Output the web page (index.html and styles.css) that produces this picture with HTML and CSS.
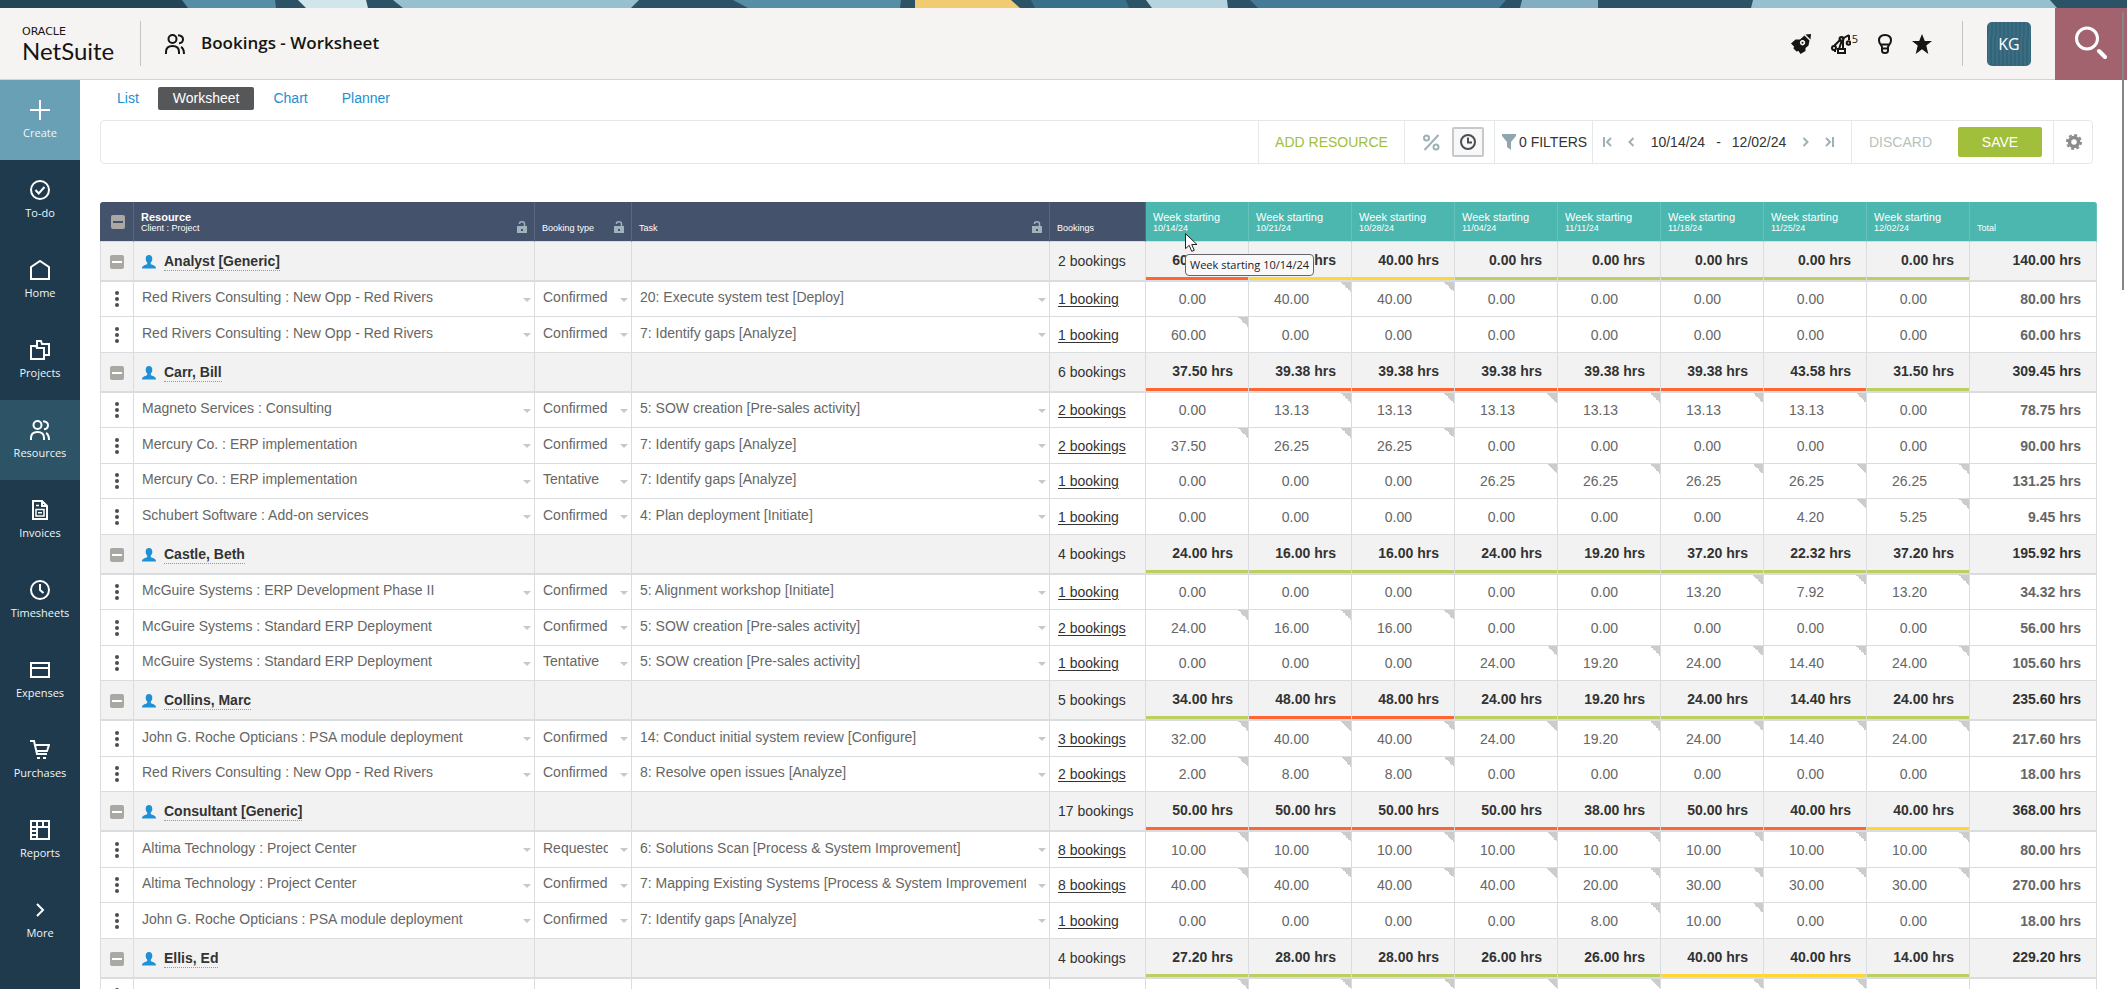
FILE: index.html
```
<!DOCTYPE html>
<html lang="en">
<head>
    <meta charset="UTF-8">
    <meta name="viewport" content="width=device-width, initial-scale=1.0">
    <title>Bookings - Worksheet</title>
    <link rel="stylesheet" href="styles.css">
</head>
<body>

    <svg class="band" viewBox="0 0 2127 8" preserveAspectRatio="none" aria-hidden="true">
        <rect width="2127" height="8" fill="#2c5265"/>
        <path fill="#244558" d="M0 0H182L188 8H0z"/>
        <path fill="#568ea6" d="M182 0H275L276 8H188z"/>
        <path fill="#d0e6ea" d="M298 0H366L368 8H306z"/>
        <path fill="#96bfcf" d="M393 0H639L631 8H403z"/>
        <path fill="#568ea6" d="M733 0H901L900 8H748z"/>
        <path fill="#f0cb72" d="M915 0H1011L1020 8H915z"/>
        <path fill="#38708a" d="M1031 0H1126L1129 8H1035z"/>
        <path fill="#b6d4df" d="M1146 0H1227L1228 8H1152z"/>
        <path fill="#457b96" d="M1250 0H1506L1499 8H1258z"/>
        <path fill="#82afc0" d="M1522 0H1598V8H1520z"/>
        <path fill="#96bfcf" d="M1753 0H2050L2057 8H1751z"/>
    </svg>

    <header class="header">
        <a class="logo" href="#"><span class="logo-top">ORACLE</span><span class="logo-name">NetSuite</span></a>
        <div class="page-title">
            <svg width="20" height="20" viewBox="0 0 20 20" fill="none" stroke="currentColor" stroke-width="2"><circle cx="7.500" cy="5" r="4"/><path d="M1 20v-2c0-4 2.500-6 6.500-6s6.500 2 6.500 6v2M13 1.200c3 .3 5 1.800 5 4s-1.500 3.800-4 4M16 13c2.300 1.200 3 3.200 3 7"/></svg>
            <h1>Bookings - Worksheet</h1>
        </div>
        <div class="header-tools">
            <button class="tool" aria-label="What's new">
                <svg width="20" height="20" viewBox="0 0 20 20" fill="currentColor"><path fill-rule="evenodd" d="M13.500 1.500l5 5-1 5-3 2.500V17l-5 3-2-3-2 .5-3-3 .5-2L0 9.500l4.500-4H9zM11.500 6a2.700 2.700 0 1 0 .1 0z"/><circle cx="11.500" cy="8.700" r="1"/><path d="M14.500.5L20 0l-.5 5.500z"/></svg>
            </button>
            <button class="tool" aria-label="Setup, 5 items">
                <svg width="20" height="20" viewBox="0 0 20 20" fill="none" stroke="currentColor" stroke-width="2"><path d="M7 15h7v4H7zM8 15l3-9M12 15V6M3 12l7-7M11 5l7-4M18 1v5M5 17H3"/><circle cx="10.500" cy="5" r="2"/><circle cx="3" cy="14" r="2"/><circle cx="17.500" cy="9" r="1.800"/></svg>
                <sup>5</sup>
            </button>
            <button class="tool" aria-label="Tips">
                <svg width="14" height="20" viewBox="0 0 14 20" fill="none" stroke="currentColor" stroke-width="2"><path d="M4 13C3.500 11 1 9.500 1 6.500 1 3 3.500 1 7 1s6 2 6 5.500c0 3-2.500 4.500-3 6.500v3.500c0 1.600-1.200 2.500-3 2.500s-3-.9-3-2.500zM3 10.500h8M4 14.500h6"/></svg>
            </button>
            <button class="tool" aria-label="Favorites">
                <svg width="20" height="20" viewBox="0 0 20 20" fill="currentColor"><path d="M10 0l2.800 7H20l-5.700 4.600L16.300 20 10 15.300 3.700 20l2-8.400L0 7h7.200z"/></svg>
            </button>
        </div>
        <button class="avatar">KG</button>
        <button class="search" aria-label="Search">
            <svg width="32" height="34" viewBox="0 0 32 34" fill="none" stroke="#fff" stroke-width="3"><circle cx="12" cy="12.500" r="10.500"/><path stroke-width="4" stroke-linecap="round" d="M24 25l6 6"/></svg>
        </button>
    </header>

    <div class="layout">
        <nav class="sidebar">
            <a class="create" href="#"><svg viewBox="0 0 20 20"><path d="M10 0v20M0 10h20"/></svg>Create</a>
            <a href="#"><svg viewBox="0 0 20 20"><circle cx="10" cy="10" r="9"/><path d="M5.500 10l3.200 3.500L14.500 7"/></svg>To-do</a>
            <a href="#"><svg viewBox="0 0 20 20"><path d="M1 19V7l9-6 9 6v12z"/></svg>Home</a>
            <a href="#"><svg viewBox="0 0 20 20"><path d="M1 6h5l1 2h7v11H1zM7 8V1h4l1 3h7v11h-5"/></svg>Projects</a>
            <a class="active" href="#"><svg viewBox="0 0 20 20"><circle cx="7.500" cy="5" r="4"/><path d="M1 20v-2c0-4 2.500-6 6.500-6s6.500 2 6.500 6v2M13 1.200c3 .3 5 1.800 5 4s-1.500 3.800-4 4M16 13c2.300 1.200 3 3.200 3 7"/></svg>Resources</a>
            <a href="#"><svg viewBox="0 0 20 20"><path d="M3 1h9l5 5v13H3zM12 1v5h5"/><path stroke-width="1.500" d="M6 5.500h3M6 9.500h8v6.500H6zM8 12.800h4"/></svg>Invoices</a>
            <a href="#"><svg viewBox="0 0 20 20"><circle cx="10" cy="10" r="9"/><path d="M10 4v6l3.500 3"/></svg>Timesheets</a>
            <a href="#"><svg viewBox="0 0 20 20"><path d="M1 3h18v14H1zM1 8h18"/></svg>Expenses</a>
            <a href="#"><svg viewBox="0 0 20 20"><path d="M0 1h4l3 13h10M5 5h14l-2 6H6"/><path d="M7 18h3M13 18h3"/></svg>Purchases</a>
            <a href="#"><svg viewBox="0 0 20 20"><path d="M1 1h18v18H1zM1 7h18M7 1v18M13 1v6M1 11h6M1 15h6"/></svg>Reports</a>
            <a href="#"><svg viewBox="0 0 20 20"><path d="M7 4l6 6-6 6"/></svg>More</a>
        </nav>

        <main class="content">
            <nav class="tabs">
                <a href="#">List</a>
                <a class="current" href="#">Worksheet</a>
                <a href="#">Chart</a>
                <a href="#">Planner</a>
            </nav>

            <div class="toolbar">
                <div class="bar-group add"><button>ADD RESOURCE</button></div>
                <div class="bar-group units">
                    <button aria-label="Percent">
                        <svg width="17" height="17" viewBox="0 0 17 17" fill="none" stroke="#9fb1b8" stroke-width="2"><circle cx="3.500" cy="4" r="2.500"/><circle cx="13" cy="13" r="2.500"/><path d="M15.500 1l-14 15"/></svg>
                    </button>
                    <button class="pressed" aria-label="Hours">
                        <svg width="16" height="16" viewBox="0 0 16 16" fill="none" stroke="#4d4d4d" stroke-width="2"><circle cx="8" cy="8" r="7"/><path d="M8 3.500V8.500h4"/></svg>
                    </button>
                </div>
                <div class="bar-group filters">
                    <button>
                        <svg width="14" height="16" viewBox="0 0 14 16" fill="#8fa6ae"><path d="M0 0h14v2L9 8v8l-4-3V8L0 2z"/></svg>
                        0 FILTERS
                    </button>
                </div>
                <div class="bar-group dates">
                    <button aria-label="First"><svg width="9" height="10" viewBox="0 0 9 10"><path d="M1 0v10M8 1L4 5l4 4"/></svg></button>
                    <button aria-label="Previous"><svg width="7" height="10" viewBox="0 0 7 10"><path d="M5.500 1l-4 4 4 4"/></svg></button>
                    <div class="range"><span>10/14/24</span><span>-</span><span>12/02/24</span></div>
                    <button aria-label="Next"><svg width="7" height="10" viewBox="0 0 7 10"><path d="M1.500 1l4 4-4 4"/></svg></button>
                    <button aria-label="Last"><svg width="9" height="10" viewBox="0 0 9 10"><path d="M8 0v10M1 1l4 4-4 4"/></svg></button>
                </div>
                <div class="bar-group actions">
                    <button class="discard" disabled>DISCARD</button>
                    <button class="save">SAVE</button>
                </div>
                <div class="bar-group settings">
                    <button aria-label="Settings">
                        <svg width="16" height="16" viewBox="0 0 16 16"><circle cx="8" cy="8" r="4.500" fill="none" stroke="#8b8b8b" stroke-width="3.500"/><circle cx="8" cy="8" r="7" fill="none" stroke="#8b8b8b" stroke-width="2" stroke-dasharray="3 2.500"/></svg>
                    </button>
                </div>
            </div>

            <table class="sheet">
                <colgroup>
                    <col class="col-toggle"><col class="col-resource"><col class="col-type"><col><col class="col-bookings">
                    <col class="col-week" span="8"><col class="col-total">
                </colgroup>
                <thead>
                    <tr id="sheet-head"></tr>
                </thead>
                <tbody id="sheet-body"></tbody>
            </table>
        </main>
    </div>

    <div class="scroll-thumb"></div>

    <script src="script.js"></script>
</body>
</html>
```
FILE: styles.css
```
* {
    box-sizing: border-box;
}

body {
    margin: 0;
    height: 100vh;
    overflow: hidden;
    display: flex;
    flex-direction: column;
    background: #fff;
    font-family: "Liberation Sans", Arial, sans-serif;
    font-size: 14px;
    color: #333;
}

a {
    text-decoration: none;
}

button {
    margin: 0;
    padding: 0;
    border: 0;
    background: none;
    font: inherit;
    color: inherit;
}

svg {
    display: block;
    flex: none;
}

.band {
    width: 100%;
    height: 8px;
}

/* Header */
.header {
    flex: none;
    height: 72px;
    display: flex;
    align-items: center;
    background: #f5f4f2;
    border-bottom: 1px solid #d5d3d0;
    color: #161513;
    font-family: "Open Sans", "Noto Sans", sans-serif;
}

.logo {
    width: 141px;
    height: 45px;
    padding: 4px 0 0 22px;
    border-right: 1px solid #c4c4c4;
    color: #161513;
    display: flex;
    flex-direction: column;
}

.logo-top {
    font: 11px/14px "DejaVu Sans", sans-serif;
}

.logo-name {
    font: 24px/24px Lato, sans-serif;
}

.page-title {
    flex: 1;
    display: flex;
    align-items: center;
    gap: 16px;
    padding-left: 24px;
}

.page-title h1 {
    margin: 0;
    padding-bottom: 2px;
    font-size: 17px;
    line-height: 24px;
    font-weight: 600;
}

.header-tools {
    display: flex;
    align-items: center;
    gap: 20px;
    height: 45px;
    padding-right: 30px;
    border-right: 1px solid #c4c4c4;
}

.tool {
    display: flex;
    align-items: center;
}

.tool sup {
    font-size: 11px;
    line-height: 10px;
    padding: 0 0 10px 1px;
}

.avatar {
    width: 44px;
    height: 44px;
    margin: 0 24px;
    border-radius: 5px;
    background: repeating-linear-gradient(92deg, #346478 0 2px, #3b6e84 2px 4px);
    color: #fff;
    font-size: 16px;
}

.search {
    width: 72px;
    height: 72px;
    padding-left: 20px;
    padding-bottom: 1px;
    background: #a2636f;
}

/* Sidebar */
.layout {
    flex: 1;
    min-height: 0;
    display: flex;
}

.sidebar {
    flex: none;
    width: 80px;
    background: #1f3a4c;
}

.sidebar a {
    height: 80px;
    padding-top: 20px;
    display: flex;
    flex-direction: column;
    align-items: center;
    gap: 5px;
    color: #f0f6f8;
    font: 11px/16px "Open Sans", "Noto Sans", sans-serif;
}

.sidebar svg {
    width: 20px;
    height: 20px;
    fill: none;
    stroke: #fff;
    stroke-width: 2;
}

.sidebar .create {
    background: #6aa0b6;
}

.sidebar .active {
    background: #2c5366;
}

/* Tabs */
.content {
    flex: 1;
    min-width: 0;
    padding: 7px 30px 0 20px;
}

.tabs {
    display: flex;
    gap: 4px;
    padding-left: 2px;
}

.tabs a {
    padding: 0 15px;
    line-height: 23px;
    color: #1e8fd0;
}

.tabs .current {
    background: #565759;
    border-radius: 2px;
    color: #fff;
}

/* Toolbar */
.toolbar {
    display: flex;
    justify-content: flex-end;
    height: 44px;
    margin: 10px 4px 38px 0;
    border: 1px solid #e5e8eb;
    border-radius: 4px;
}

.bar-group {
    display: flex;
    align-items: center;
    border-left: 1px solid #e5e8eb;
}

.add {
    width: 146px;
    justify-content: center;
    color: #a1bf3a;
}

.units {
    width: 90px;
    gap: 12px;
    padding-left: 18px;
}

.units .pressed {
    width: 32px;
    height: 30px;
    border: 2px solid #c8c8c8;
    border-radius: 2px;
    background: #f7f8f9;
    display: flex;
    align-items: center;
    justify-content: center;
}

.filters {
    width: 98px;
    padding-left: 7px;
}

.filters button {
    display: flex;
    align-items: center;
    gap: 3px;
}

.dates {
    width: 259px;
    padding: 0 17px 0 10px;
    justify-content: space-between;
}

.range {
    display: flex;
    gap: 11px;
}

.dates svg {
    fill: none;
    stroke: #9fb1b8;
    stroke-width: 2;
}

.actions {
    width: 202px;
    padding: 0 11px 0 17px;
    justify-content: space-between;
}

.discard {
    color: #b8c2bb;
}

.save {
    width: 84px;
    height: 30px;
    border-radius: 2px;
    background: #a1bf3a;
    color: #fff;
}

.settings {
    width: 39px;
    padding-left: 12px;
}

/* Worksheet */
.sheet {
    width: 100%;
    table-layout: fixed;
    border-collapse: separate;
    border-spacing: 0;
}

.col-toggle {
    width: 34px;
}

.col-resource {
    width: 401px;
}

.col-type {
    width: 97px;
}

.col-bookings {
    width: 96px;
}

.col-week {
    width: 103px;
}

.col-total {
    width: 127px;
}

.sheet th {
    position: relative;
    height: 40px;
    padding: 0 7px 8px;
    vertical-align: bottom;
    text-align: left;
    font-size: 9px;
    line-height: 10px;
    font-weight: 400;
    color: #fff;
    background: #45526b;
    border-right: 1px solid #5b6780;
    border-bottom: 1px solid #d8dce0;
}

.sheet th:first-child {
    padding: 0 0 0 11px;
    vertical-align: middle;
    border-top-left-radius: 3px;
}

.sheet th:last-child {
    border-top-right-radius: 3px;
}

.sheet th .line {
    display: block;
    font-size: 11px;
    line-height: 12px;
}

.sheet th.time {
    background: #4bb7af;
    border-right-color: #66c2bb;
}

.th-flex {
    display: flex;
    justify-content: space-between;
    align-items: flex-end;
}

.sheet td {
    padding: 0 8px;
    border-right: 1px solid #d9dde0;
    border-bottom: 1px solid #d9dde0;
    white-space: nowrap;
}

.sheet td:first-child {
    padding: 0 0 0 9px;
    border-left: 1px solid #d9dde0;
}

.sheet .group td:first-child {
    padding-top: 2px;
}

.group td {
    height: 40px;
    background: #f2f2f2;
    border-bottom: 2px solid #d9dde0;
}

.row td {
    height: 35px;
    color: #666;
}

.row.tall td {
    height: 36px;
}

.toggle {
    width: 14px;
    height: 14px;
    display: flex;
    align-items: center;
    justify-content: center;
    border-radius: 2px;
    background: #aaa8a2;
}

.toggle::after {
    content: "";
    width: 10px;
    height: 2px;
    background: #fff;
}

.sheet th .toggle::after {
    background: #45526b;
}

.name {
    display: flex;
    align-items: center;
    gap: 8px;
    padding-top: 2px;
}

.name a {
    line-height: 17px;
    font-weight: 700;
    color: #333;
    border-bottom: 1px dotted #999;
}

.menu {
    width: 14px;
    display: flex;
    justify-content: center;
}

.sheet td.pick {
    position: relative;
    padding: 0 0 4px;
}

/* small arrow over the right end of the drop-down */
.pick::after {
    content: "";
    position: absolute;
    right: 3px;
    top: 16px;
    border: 4px solid transparent;
    border-top-color: #c8c8c8;
    border-bottom: 0;
}

.pick select {
    display: block;
    width: 100%;
    height: 24px;
    padding: 0 23px 0 8px;
    border: 0;
    background: none;
    appearance: none;
    font: inherit;
    color: inherit;
}

.count a {
    color: #333;
    text-decoration: underline;
    text-underline-offset: 2px;
}

.sheet td.hours {
    padding-right: 42px;
    text-align: right;
}

.hours.booked {
    background: linear-gradient(to bottom left, #ccc 50%, transparent 50%) top right / 10px 10px no-repeat;
}

.sheet td.sum {
    padding: 0 15px 2px 0;
    text-align: right;
    font-weight: 700;
    color: #333;
}

.sheet td.over {
    box-shadow: inset 0 -3px #ff6633;
}

.sheet td.full {
    box-shadow: inset 0 -3px #ffd633;
}

.sheet td.under {
    box-shadow: inset 0 -3px #bdcf5f;
}

.sheet td.total {
    padding-right: 15px;
    text-align: right;
    font-weight: 700;
}

.group td.total {
    padding-bottom: 2px;
}

/* Hover hint on the first week */
.cursor {
    position: absolute;
    left: 39px;
    top: 31px;
    z-index: 3;
}

.hint {
    position: absolute;
    left: 39px;
    top: 52px;
    z-index: 2;
    padding: 0 4px;
    border: 1px solid #666;
    border-radius: 4px;
    background: #f9f9fb;
    color: #222;
    font: 11px/20px "Open Sans", "Noto Sans", sans-serif;
    white-space: nowrap;
}

.scroll-thumb {
    position: absolute;
    right: 3px;
    top: 12px;
    width: 2px;
    height: 278px;
    background: #868686;
}
```
FILE: script.js
```
const weeks = ['10/14/24', '10/21/24', '10/28/24', '11/04/24', '11/11/24', '11/18/24', '11/25/24', '12/02/24'];

// load: o = over, f = full, u = under, one letter per week
// row: [client : project, type, task, bookings, hours, total]
const groups = [
    {
        name: 'Analyst [Generic]', bookings: 2, load: 'offuuuuu', total: '140.00',
        hours: '60.00 40.00 40.00 0.00 0.00 0.00 0.00 0.00',
        rows: [
            ['Red Rivers Consulting : New Opp - Red Rivers', 'Confirmed', '20: Execute system test [Deploy]', 1, '0.00 40.00 40.00 0.00 0.00 0.00 0.00 0.00', '80.00'],
            ['Red Rivers Consulting : New Opp - Red Rivers', 'Confirmed', '7: Identify gaps [Analyze]', 1, '60.00 0.00 0.00 0.00 0.00 0.00 0.00 0.00', '60.00']
        ]
    },
    {
        name: 'Carr, Bill', bookings: 6, load: 'ooooooou', total: '309.45',
        hours: '37.50 39.38 39.38 39.38 39.38 39.38 43.58 31.50',
        rows: [
            ['Magneto Services : Consulting', 'Confirmed', '5: SOW creation [Pre-sales activity]', 2, '0.00 13.13 13.13 13.13 13.13 13.13 13.13 0.00', '78.75'],
            ['Mercury Co. : ERP implementation', 'Confirmed', '7: Identify gaps [Analyze]', 2, '37.50 26.25 26.25 0.00 0.00 0.00 0.00 0.00', '90.00'],
            ['Mercury Co. : ERP implementation', 'Tentative', '7: Identify gaps [Analyze]', 1, '0.00 0.00 0.00 26.25 26.25 26.25 26.25 26.25', '131.25'],
            ['Schubert Software : Add-on services', 'Confirmed', '4: Plan deployment [Initiate]', 1, '0.00 0.00 0.00 0.00 0.00 0.00 4.20 5.25', '9.45']
        ]
    },
    {
        name: 'Castle, Beth', bookings: 4, load: 'uuuuuuuu', total: '195.92',
        hours: '24.00 16.00 16.00 24.00 19.20 37.20 22.32 37.20',
        rows: [
            ['McGuire Systems : ERP Development Phase II', 'Confirmed', '5: Alignment workshop [Initiate]', 1, '0.00 0.00 0.00 0.00 0.00 13.20 7.92 13.20', '34.32'],
            ['McGuire Systems : Standard ERP Deployment', 'Confirmed', '5: SOW creation [Pre-sales activity]', 2, '24.00 16.00 16.00 0.00 0.00 0.00 0.00 0.00', '56.00'],
            ['McGuire Systems : Standard ERP Deployment', 'Tentative', '5: SOW creation [Pre-sales activity]', 1, '0.00 0.00 0.00 24.00 19.20 24.00 14.40 24.00', '105.60']
        ]
    },
    {
        name: 'Collins, Marc', bookings: 5, load: 'uoouuuuu', total: '235.60',
        hours: '34.00 48.00 48.00 24.00 19.20 24.00 14.40 24.00',
        rows: [
            ['John G. Roche Opticians : PSA module deployment', 'Confirmed', '14: Conduct initial system review [Configure]', 3, '32.00 40.00 40.00 24.00 19.20 24.00 14.40 24.00', '217.60'],
            ['Red Rivers Consulting : New Opp - Red Rivers', 'Confirmed', '8: Resolve open issues [Analyze]', 2, '2.00 8.00 8.00 0.00 0.00 0.00 0.00 0.00', '18.00']
        ]
    },
    {
        name: 'Consultant [Generic]', bookings: 17, load: 'ooooooof', total: '368.00',
        hours: '50.00 50.00 50.00 50.00 38.00 50.00 40.00 40.00',
        rows: [
            ['Altima Technology : Project Center', 'Requested', '6: Solutions Scan [Process & System Improvement]', 8, '10.00 10.00 10.00 10.00 10.00 10.00 10.00 10.00', '80.00'],
            ['Altima Technology : Project Center', 'Confirmed', '7: Mapping Existing Systems [Process & System Improvement]', 8, '40.00 40.00 40.00 40.00 20.00 30.00 30.00 30.00', '270.00'],
            ['John G. Roche Opticians : PSA module deployment', 'Confirmed', '7: Identify gaps [Analyze]', 1, '0.00 0.00 0.00 0.00 8.00 10.00 0.00 0.00', '18.00']
        ]
    },
    {
        name: 'Ellis, Ed', bookings: 4, load: 'uuuuuffu', total: '229.20',
        hours: '27.20 28.00 28.00 26.00 26.00 40.00 40.00 14.00',
        rows: []
    }
];

const loadClass = { o: 'over', f: 'full', u: 'under' };

const lock = '<svg width="10" height="12" viewBox="0 0 10 12"><path fill="none" stroke="#9eb3bb" stroke-width="1.500" d="M2.500 3V2.500C2.500 1.400 3.500.8 5 .8s2.500.7 2.500 2V6"/><path fill="#9eb3bb" fill-rule="evenodd" d="M0 5h10v7H0zM4 8v2h2V8z"/></svg>';
const person = '<svg width="14" height="14" viewBox="0 0 14 14" fill="#1e91d6"><path d="M7 0c2.200 0 3.300 1.500 3.300 3.700 0 1.700-.6 2.800-1.500 3.800v1.700c2.700.8 5.200 1.600 5.200 4.300H0c0-2.700 2.500-3.500 5.200-4.300V7.500c-.9-1-1.500-2.100-1.500-3.800C3.700 1.500 4.800 0 7 0z"/></svg>';
const dots = '<svg width="4" height="16" viewBox="0 0 4 16" fill="#4d4d4d"><circle cx="2" cy="2" r="2"/><circle cx="2" cy="8" r="2"/><circle cx="2" cy="14" r="2"/></svg>';
const cursor = '<svg class="cursor" width="13" height="20" viewBox="0 0 13 20"><path fill="#fff" stroke="#222" d="M.5.7v15l3.700-3.400 2.500 6 2.600-1-2.600-5.800H12z"/></svg>';

function count(n) {
    return n + (n === 1 ? ' booking' : ' bookings');
}

function picker(label, value) {
    return `<td class="pick"><select aria-label="${label}"><option>${value.replace('&', '&amp;')}</option></select></td>`;
}

function groupRow(group) {
    const sums = group.hours.split(' ').map((h, i) =>
        `<td class="sum ${loadClass[group.load[i]]}">${h} hrs</td>`).join('');
    return `<tr class="group">
        <td><button class="toggle" aria-label="Collapse ${group.name}"></button></td>
        <td><div class="name">${person}<a href="#">${group.name}</a></div></td>
        <td></td><td></td>
        <td>${count(group.bookings)}</td>${sums}
        <td class="sum total">${group.total} hrs</td>
    </tr>`;
}

function bookingRow(row, tall) {
    const hours = row[4].split(' ').map(h =>
        `<td class="hours${h === '0.00' ? '' : ' booked'}">${h}</td>`).join('');
    return `<tr class="row${tall ? ' tall' : ''}">
        <td><button class="menu" aria-label="Row menu">${dots}</button></td>
        ${picker('Client and project', row[0])}${picker('Booking type', row[1])}${picker('Task', row[2])}
        <td class="count"><a href="#">${count(row[3])}</a></td>${hours}
        <td class="total">${row[5]} hrs</td>
    </tr>`;
}

document.getElementById('sheet-head').innerHTML =
    '<th><button class="toggle" aria-label="Collapse all"></button></th>' +
    `<th><div class="th-flex"><span><b class="line">Resource</b>Client : Project</span>${lock}</div></th>` +
    `<th><div class="th-flex">Booking type${lock}</div></th>` +
    `<th><div class="th-flex">Task${lock}</div></th>` +
    '<th>Bookings</th>' +
    weeks.map((week, i) =>
        `<th class="time"><span class="line">Week starting</span>${week}` +
        (i === 0 ? `${cursor}<div class="hint" role="tooltip">Week starting ${week}</div>` : '') +
        '</th>').join('') +
    '<th class="time">Total</th>';

let n = 0;
let html = '';
groups.forEach(group => {
    html += groupRow(group);
    group.rows.forEach(row => {
        html += bookingRow(row, n % 2 === 1);
        n++;
    });
});

html += `<tr class="row"><td><button class="menu" aria-label="Row menu">${dots}</button></td><td></td><td></td><td></td><td></td>` +
    weeks.map((week, i) => `<td class="hours${i < 7 ? ' booked' : ''}"></td>`).join('') + '<td></td></tr>';

document.getElementById('sheet-body').innerHTML = html;
```
